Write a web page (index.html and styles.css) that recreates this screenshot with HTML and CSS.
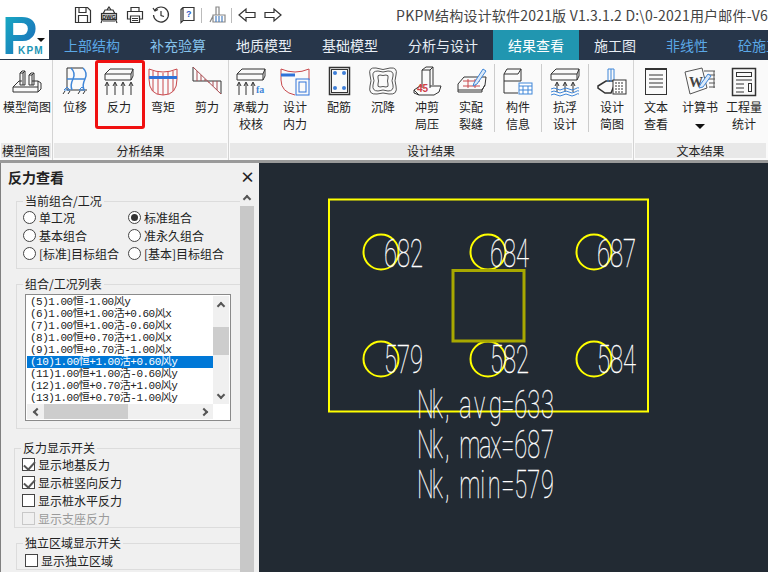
FILE: index.html
```html
<!DOCTYPE html>
<html lang="zh-CN">
<head>
    <meta charset="UTF-8">
    <meta name="viewport" content="width=device-width, initial-scale=1.0">
    <title>PKPM结构设计软件2021版</title>
    <link rel="stylesheet" href="styles.css">
    </head>
<body>

<div class="logo">
    <svg width="49" height="49" viewBox="0 0 49 49">
        <defs>
            <linearGradient id="logoFill" x1="0" y1="0" x2="1" y2="1">
                <stop offset="0" stop-color="#17b3c4"/>
                <stop offset="1" stop-color="#1d62b8"/>
            </linearGradient>
        </defs>
        <text x="2" y="44" class="logo-p" fill="url(#logoFill)">P</text>
        <text x="18" y="44" class="logo-kpm">KPM</text>
        <path d="M37 28h8l-4 4z" fill="#111"/>
    </svg>
</div>

<header class="titlebar">
    <div class="quick-tools">
        <svg class="tool" viewBox="0 0 18 18"><path d="M1.500 1.500h12l3 3v12h-15z M5 1.500v5h7v-5 M4.500 16.500v-7h9v7"/></svg>
        <svg class="tool" viewBox="0 0 18 18"><path d="M9 1l2 3H7z M5 4h8l2 4H3z M3 12l-2 5 M15 12l2 5 M3 15h12"/><rect x="1.500" y="7.500" width="15" height="6" fill="#ccc"/><text x="9" y="12.500" class="dwg-mark">DWG</text></svg>
        <svg class="tool" viewBox="0 0 18 18"><path d="M5 5V1.500h8V5 M4.500 13H1.500V5.500h15V13h-3 M4.500 10h9v6.500h-9z M6 12.500h6 M6 14.500h6"/></svg>
        <svg class="tool" viewBox="0 0 18 18"><path d="M3 4a7.500 7.500 0 1 1-1.500 5 M1 2l2 3 3-1.500 M9 5v4.500l3 1"/></svg>
        <svg class="tool" viewBox="0 0 18 18"><path d="M3 3.500 5 1.500h11v13H5l-2 2z M3 3.500v13 M5 1.500v13"/><text x="8" y="11" class="help-mark">?</text></svg>
        <span class="tool-sep"></span>
        <svg class="tool tool-pale" viewBox="0 0 18 18"><path d="M8 1h3v8H8z M5 9h12v7H5z M2 16l3-6" /><path d="M8 10v6 M11 10v6 M14 10v6" stroke="#4a7fc0"/></svg>
        <span class="tool-sep"></span>
        <svg class="tool" viewBox="0 0 18 18"><path d="M1 9l7-6v3.500h9v5H8V15z"/></svg>
        <svg class="tool" viewBox="0 0 18 18"><path d="M17 9l-7-6v3.500H1v5h9V15z"/></svg>
    </div>
    <div class="app-title">PKPM结构设计软件2021版 V1.3.1.2 D:\0-2021用户邮件-V6</div>
</header>

<nav class="tabs">
    <a class="tab tab-blue">上部结构</a>
    <a class="tab tab-sky">补充验算</a>
    <a class="tab">地质模型</a>
    <a class="tab">基础模型</a>
    <a class="tab">分析与设计</a>
    <a class="tab active">结果查看</a>
    <a class="tab">施工图</a>
    <a class="tab tab-blue">非线性</a>
    <a class="tab tab-blue">砼施工</a>
</nav>

<section class="ribbon">
    <div class="group group-model">
        <div class="items">
            <div class="item">
                <svg class="ico" viewBox="0 0 44 36"><path d="M8 21l6-6h3 M27 15h6v6H8v5h25v-5 M33 15l3 2v6l-3 3"/><path d="M15 7l2-2h3l0 14h-5z M15 7h3v12 M18 7l2-2 M24 9l2-2h3v12h-5z M24 9h3v10 M27 9l2-2"/></svg>
                <span class="label">模型简图</span>
            </div>
        </div>
        <div class="band">模型简图</div>
    </div>

    <div class="group group-analysis">
        <div class="items">
            <div class="item">
                <svg class="ico" viewBox="0 0 44 36"><path d="M14 2v22 M14 2h16 M14 24h20" stroke="#333"/><path d="M30 2q5 5 2 11t-1 11 M14 13h18 M18 2q5 5 2 11t-1 11" stroke="#3f86d8" stroke-width="1.500"/><path d="M11 24l3-3 3 3z M26 24l3-3 3 3z" stroke="#3f86d8"/><path d="M10 28l2-3 M15 28l2-3 M25 28l2-3 M30 28l2-3"/></svg>
                <span class="label">位移</span>
            </div>
            <div class="item item-marked">
                <svg class="ico" viewBox="0 0 44 36"><path d="M8 8l5-5h23l-2 5H8v6h26V8 M34 14l2-4V3"/><path d="M10 29V17M8 20l2-4 2 4 M18 29V17M16 20l2-4 2 4 M26 29V17M24 20l2-4 2 4 M34 29V17M32 20l2-4 2 4"/></svg>
                <span class="label">反力</span>
            </div>
            <div class="item">
                <svg class="ico" viewBox="0 0 44 36"><path d="M8 3q14 6 28 0v10q0 16-14 16T8 13z M12 5v20 M17 6v22 M22 7v22 M27 6v22 M32 5v20" stroke="#c8484c"/><path d="M8 11.500h28" stroke="#2f72d8" stroke-width="3"/></svg>
                <span class="label">弯矩</span>
            </div>
            <div class="item">
                <svg class="ico" viewBox="0 0 44 36"><path d="M8 1v14h28v13"/><path d="M8 1l28 27 M12 5v10 M16 9v6 M20 13v2 M24 16v1 M28 15v5 M32 15v9" stroke="#a84a50"/></svg>
                <span class="label">剪力</span>
            </div>
        </div>
        <div class="band">分析结果</div>
    </div>

    <div class="group group-design">
        <div class="items">
            <div class="item item-wrap">
                <svg class="ico" viewBox="0 0 44 36"><path d="M8 8l5-5h23l-2 5H8v6h26V8 M34 14l2-4V3"/><path d="M10 29V17M8 20l2-4 2 4 M17 29V17M15 20l2-4 2 4 M24 29V17M22 20l2-4 2 4"/><text x="27" y="27" class="ico-text">fa</text></svg>
                <span class="label">承载力<br>校核</span>
            </div>
            <div class="item">
                <svg class="ico" viewBox="0 0 44 36"><path d="M8 3q14 6 28 0v11 M8 3v11q0 12 14 15" stroke="#c8484c"/><path d="M8 9h14" stroke="#2f72d8" stroke-width="3"/><rect x="23" y="13" width="13" height="16" stroke="#2f72d8" fill="#fafafa"/><rect x="26" y="16" width="7" height="10" stroke="#2f72d8"/></svg>
                <span class="label">设计<br>内力</span>
            </div>
            <div class="item">
                <svg class="ico" viewBox="0 0 44 36"><rect x="12.500" y="1.500" width="20" height="27" stroke-width="1.500"/><rect x="14.500" y="3.500" width="16" height="23"/><circle cx="18" cy="7" r="2" class="dot"/><circle cx="27" cy="7" r="2" class="dot"/><circle cx="18" cy="22" r="2" class="dot"/><circle cx="27" cy="22" r="2" class="dot"/></svg>
                <span class="label">配筋</span>
            </div>
            <div class="item">
                <svg class="ico ico-gray" viewBox="0 0 44 36"><path d="M15 2Q22 5 29 2 37 1 35 9 33 15 35 20 37 29 28 28 22 26 16 28 7 29 9 20 11 15 9 9 7 1 15 2z"/><path d="M17 5Q22 7 27 5 33 5 32 10 30 15 32 19 33 25 27 25 22 23 17 25 11 25 12 19 14 15 12 10 11 5 17 5z"/><path d="M19 9Q22 10 25 9 28 9 27 12 26 15 27 18 28 21 25 21 22 20 19 21 16 21 17 18 18 15 17 12 16 9 19 9z"/></svg>
                <span class="label">沉降</span>
            </div>
            <div class="item">
                <svg class="ico" viewBox="0 0 44 36"><path d="M17 4l4-3h7l-3 3h-8v18 M25 4v18 M28 1v18"/><path d="M9 24l6-4h2 M25 20h11l-2 6-5 3H14l-5-5v3l5 2"/><text x="12" y="26" class="ico-text ico-red">45</text></svg>
                <span class="label">冲剪<br>局压</span>
            </div>
            <div class="item">
                <svg class="ico" viewBox="0 0 44 36"><path d="M9 18l6-7h22l-1 8-3 5H9z M9 24v2h24v-2 M33 24l3-5"/><path d="M14 15h17 M14 20h17 M19 13v9 M26 13v9" stroke="#c8484c"/><path d="M25 17l9-14 3 2-9 13-4 2z" stroke="#3f86d8" fill="#dbe9f8"/></svg>
                <span class="label">实配<br>裂缝</span>
            </div>
            <span class="item-sep"></span>
            <div class="item">
                <svg class="ico" viewBox="0 0 44 36"><path d="M8 8h14l3-5v12H8z M8 8l3-5h14 M8 15v12h14"/><rect x="23" y="17" width="13" height="11" stroke="#3f86d8" fill="#fff"/><path d="M23 20h13 M23 24h13 M27 20v8 M32 20v8" stroke="#3f86d8"/></svg>
                <span class="label">构件<br>信息</span>
            </div>
            <span class="item-sep"></span>
            <div class="item">
                <svg class="ico" viewBox="0 0 44 36"><path d="M8 8l5-5h23l-2 5H8v6h26V8 M34 14l2-4V3"/><path d="M14 26V17M12 20l2-4 2 4 M22 26V17M20 20l2-4 2 4 M30 26V17M28 20l2-4 2 4"/><path d="M8 23q3-2 6 0t6 0 6 0 6 0 4-1 M8 26q3-2 6 0t6 0 6 0 6 0 4-1 M8 29q3-2 6 0t6 0 6 0 6 0 4-1" stroke="#3f86d8"/></svg>
                <span class="label">抗浮<br>设计</span>
            </div>
            <span class="item-sep"></span>
            <div class="item">
                <svg class="ico" viewBox="0 0 44 36"><path d="M8 20l8-5h10l-5 12h-6L8 22z" stroke-width="1.500"/><path d="M18 16V3h6v13 M21 3v13" stroke="#3f86d8"/><rect x="23" y="14" width="13" height="14" fill="#fff"/><path d="M25 17h9 M25 20h9 M25 23h9 M25 26h9" stroke-dasharray="2 1"/></svg>
                <span class="label">设计<br>简图</span>
            </div>
        </div>
        <div class="band">设计结果</div>
    </div>

    <div class="group group-text">
        <div class="items">
            <div class="item">
                <svg class="ico" viewBox="0 0 44 36"><rect x="11.500" y="2.500" width="21" height="26"/><path d="M11 3h22" stroke-width="2"/><path d="M15 9h14 M15 13h14 M15 17h14 M15 21h14"/></svg>
                <span class="label">文本<br>查看</span>
            </div>
            <div class="item">
                <svg class="ico ico-gray" viewBox="0 0 44 36"><path d="M7 6l17-4 5 20-17 6z"/><path d="M26 5h11 M30 9h7 M31 13h6 M31 17h6 M31 21h6 M36 5v17" stroke="#555"/><text x="11" y="21" class="ico-word">W</text><path d="M22 19l8-11 3 2-8 11-4 1z" stroke="#3f86d8" fill="#dbe9f8"/></svg>
                <span class="label">计算书</span>
                <span class="menu-caret"></span>
            </div>
            <div class="item">
                <svg class="ico" viewBox="0 0 44 36"><rect x="10.500" y="2.500" width="23" height="27" stroke-width="1.500"/><rect x="14.500" y="6.500" width="15" height="4"/><path d="M14 14h16 M14 18h8 M14 22h8 M14 26h8"/><rect x="26.500" y="17.500" width="3" height="8"/></svg>
                <span class="label">工程量<br>统计</span>
            </div>
        </div>
        <div class="band">文本结果</div>
    </div>
</section>

<main class="workspace">
    <aside class="side">
        <div class="side-title">
            <span>反力查看</span>
            <span class="side-close">×</span>
        </div>
        <div class="side-body">
            <div class="side-scroll">
                <fieldset class="box">
                    <legend>当前组合/工况</legend>
                    <div class="radio-grid">
                        <label class="opt"><input type="radio" name="combo">单工况</label>
                        <label class="opt"><input type="radio" name="combo" checked>标准组合</label>
                        <label class="opt"><input type="radio" name="combo">基本组合</label>
                        <label class="opt"><input type="radio" name="combo">准永久组合</label>
                        <label class="opt"><input type="radio" name="combo">[标准]目标组合</label>
                        <label class="opt"><input type="radio" name="combo">[基本]目标组合</label>
                    </div>
                </fieldset>

                <fieldset class="box box-list">
                    <legend>组合/工况列表</legend>
                    <div class="list-box">
                        <div class="list-rows">
                            <div class="list-row">(5)1.00恒-1.00风y</div>
                            <div class="list-row">(6)1.00恒+1.00活+0.60风x</div>
                            <div class="list-row">(7)1.00恒+1.00活-0.60风x</div>
                            <div class="list-row">(8)1.00恒+0.70活+1.00风x</div>
                            <div class="list-row">(9)1.00恒+0.70活-1.00风x</div>
                            <div class="list-row selected">(10)1.00恒+1.00活+0.60风y</div>
                            <div class="list-row">(11)1.00恒+1.00活-0.60风y</div>
                            <div class="list-row">(12)1.00恒+0.70活+1.00风y</div>
                            <div class="list-row">(13)1.00恒+0.70活-1.00风y</div>
                        </div>
                        <div class="vbar">
                            <span class="bar-btn"><i class="chev chev-up"></i></span>
                            <span class="vbar-thumb"></span>
                            <span class="bar-btn bar-end"><i class="chev chev-down"></i></span>
                        </div>
                        <div class="hbar">
                            <span class="bar-btn"><i class="chev chev-left"></i></span>
                            <span class="hbar-thumb"></span>
                            <span class="bar-btn bar-end"><i class="chev chev-right"></i></span>
                        </div>
                    </div>
                </fieldset>

                <fieldset class="box box-switch">
                    <legend>反力显示开关</legend>
                    <label class="opt"><input type="checkbox" checked>显示地基反力</label>
                    <label class="opt"><input type="checkbox" checked>显示桩竖向反力</label>
                    <label class="opt"><input type="checkbox">显示桩水平反力</label>
                    <label class="opt opt-off"><input type="checkbox" disabled>显示支座反力</label>
                </fieldset>

                <fieldset class="box box-region">
                    <legend>独立区域显示开关</legend>
                    <label class="opt"><input type="checkbox">显示独立区域</label>
                </fieldset>
            </div>
            <div class="side-bar">
                <span class="side-bar-btn"><i class="chev chev-up"></i></span>
                <span class="side-bar-thumb"></span>
            </div>
        </div>
    </aside>

    <div class="canvas">
        <svg class="drawing" width="509" height="409" viewBox="259 163 509 409">
            <rect x="329" y="199.500" width="319" height="212" class="cad-yellow"/>
            <circle cx="381" cy="252" r="17.500" class="cad-circle"/>
            <circle cx="488" cy="252" r="17.500" class="cad-circle"/>
            <circle cx="594" cy="252" r="17.500" class="cad-circle"/>
            <circle cx="381" cy="359" r="17.500" class="cad-circle"/>
            <circle cx="488" cy="359" r="17.500" class="cad-circle"/>
            <circle cx="594" cy="359" r="17.500" class="cad-circle"/>
            <rect x="453" y="270.500" width="71" height="70.500" class="cad-column"/>
            <text x="384" y="267" textLength="39" lengthAdjust="spacingAndGlyphs" class="cad-text">682</text>
            <text x="490" y="267" textLength="39" lengthAdjust="spacingAndGlyphs" class="cad-text">684</text>
            <text x="597" y="267" textLength="39" lengthAdjust="spacingAndGlyphs" class="cad-text">687</text>
            <text x="384" y="373" textLength="39" lengthAdjust="spacingAndGlyphs" class="cad-text">579</text>
            <text x="490" y="373" textLength="39" lengthAdjust="spacingAndGlyphs" class="cad-text">582</text>
            <text x="597" y="373" textLength="39" lengthAdjust="spacingAndGlyphs" class="cad-text">584</text>
            <text transform="translate(417 418) scale(.62 1)" x="0 24 45 68 92 116 136 157 178 200" class="cad-text">Nk,avg=633</text>
            <text transform="translate(417 458) scale(.62 1)" x="0 24 45 68 100 118 136 157 178 200" class="cad-text">Nk,max=687</text>
            <text transform="translate(417 498) scale(.62 1)" x="0 24 45 68 102 114 136 157 178 200" class="cad-text">Nk,min=579</text>
        </svg>
    </div>
</main>

</body>
</html>
```

FILE: styles.css
```css
* {
    box-sizing: border-box;
}

html, body {
    margin: 0;
    height: 100%;
}

body {
    position: relative;
    width: 768px;
    height: 572px;
    overflow: hidden;
    display: flex;
    flex-direction: column;
    background-color: #fafafa;
    color: #222;
    font-family: "Noto Sans CJK SC", "Noto Sans", sans-serif;
    font-size: 12px;
}

/* logo sits over the title bar and the tabs */
.logo {
    position: absolute;
    left: 0;
    top: 10px;
    width: 49px;
    height: 49px;
    background-color: #fff;
}

.logo svg {
    display: block;
    overflow: visible;
}

.logo-p {
    font-family: "Liberation Sans", sans-serif;
    font-size: 53px;
    font-weight: bold;
}

.logo-kpm {
    font-family: "Liberation Sans", sans-serif;
    font-size: 10px;
    font-weight: bold;
    letter-spacing: 1.2px;
    fill: #1b94b4;
}

.titlebar {
    height: 30px;
    flex: none;
    display: flex;
    align-items: center;
    background-color: #fff;
    padding-left: 70px;
}

.quick-tools {
    display: flex;
    align-items: center;
    width: 328px;
}

.tool {
    width: 18px;
    height: 18px;
    margin: 0 4px;
    fill: none;
    stroke: #333;
    stroke-width: 1.2;
}

.tool-pale {
    stroke: #888;
}

.tool-sep {
    width: 1px;
    height: 15px;
    margin: 0 2px 0 1px;
    background-color: #bbb;
}

.help-mark {
    font-family: "Liberation Sans", sans-serif;
    font-size: 9px;
    font-weight: bold;
    fill: #2f62c8;
    stroke: none;
}

.dwg-mark {
    font-family: "Liberation Sans", sans-serif;
    font-size: 5.5px;
    font-weight: bold;
    text-anchor: middle;
    fill: #222;
    stroke: none;
}

.app-title {
    font-size: 14px;
    color: #444;
    white-space: nowrap;
    line-height: 30px;
    letter-spacing: 0.2px;
}

.tabs {
    height: 30px;
    flex: none;
    display: flex;
    padding-left: 49px;
    background-color: #27364a;
}

.tab {
    flex: none;
    padding: 0 15px;
    font-size: 14px;
    line-height: 31px;
    color: #e8eef5;
}

.tab-blue {
    color: #5ba8e6;
}

.tab-sky {
    color: #86c3ec;
}

.tab.active {
    background-color: #2196b0;
    color: #fff;
}

.ribbon {
    height: 103px;
    flex: none;
    display: flex;
    background-color: #fafafa;
    border-bottom: 3px solid #9a9a9a;
}

.group {
    display: flex;
    flex-direction: column;
}

.group + .group {
    box-shadow: -1px 0 0 #d4d4d4;
}

.group-model {
    width: 53px;
}

.group-analysis {
    width: 176px;
}

.group-design {
    width: 405px;
}

.group-text {
    width: 134px;
}

.items {
    height: 83px;
    flex: none;
    display: flex;
}

.group-model .items {
    padding-left: 5px;
}

.item {
    position: relative;
    width: 44px;
    flex: none;
    display: flex;
    flex-direction: column;
    align-items: center;
    padding-top: 6px;
}

/* red annotation box drawn round one button */
.item-marked::after {
    content: "";
    position: absolute;
    left: -2px;
    top: 0;
    width: 44px;
    height: 63px;
    border: 3px solid #f01010;
    border-radius: 3px;
}

.ico {
    width: 44px;
    height: 36px;
    flex: none;
    fill: none;
    stroke: #333;
    stroke-width: 1;
}

.ico-gray {
    stroke: #555;
}

.dot {
    fill: #3f7fd8;
    stroke: none;
}

.ico-text {
    font-family: "Liberation Serif", serif;
    font-size: 10px;
    font-weight: bold;
    fill: #3f86d8;
    stroke: none;
}

.ico-red {
    font-family: "Liberation Sans", sans-serif;
    fill: #d04048;
}

.ico-word {
    font-family: "Liberation Serif", serif;
    font-size: 14px;
    font-weight: bold;
    fill: #444;
    stroke: none;
}

.label {
    margin-top: -4px;
    line-height: 17px;
    text-align: center;
    white-space: nowrap;
}

.item-sep {
    width: 1px;
    height: 68px;
    margin: 4px 1px 0;
    flex: none;
    background-color: #ccc;
}

.menu-caret {
    margin-top: 9px;
    border-style: solid;
    border-width: 5px 5px 0;
    border-color: #111 transparent transparent;
}

.band {
    height: 15px;
    margin: 0 2px 0 1px;
    flex: none;
    background-color: #e8e8e8;
    line-height: 15px;
    text-align: center;
    white-space: nowrap;
}

.workspace {
    flex: 1;
    min-height: 0;
    display: flex;
}

.side {
    width: 259px;
    flex: none;
    display: flex;
    flex-direction: column;
    border-left: 1px solid #808080;
    padding-right: 5px;
    background-color: #f0f0f0;
}

.side-title {
    height: 26px;
    flex: none;
    display: flex;
    align-items: center;
    justify-content: space-between;
    padding: 2px 2px 0 7px;
    font-size: 14px;
    font-weight: bold;
}

.side-close {
    width: 12px;
    font-size: 15px;
    line-height: 18px;
    text-align: center;
}

.side-body {
    flex: 1;
    min-height: 0;
    display: flex;
}

.side-scroll {
    width: 239px;
    flex: none;
    overflow: hidden;
}

.side-bar {
    width: 14px;
    flex: none;
    display: flex;
    flex-direction: column;
    background-color: #f0f0f0;
}

.side-bar-btn {
    height: 17px;
    flex: none;
    display: flex;
    align-items: center;
    justify-content: center;
}

.side-bar-thumb {
    flex: 1;
    background-color: #c8c8c8;
}

.box {
    min-width: 0;
    margin: 0 0 0 15px;
    padding: 0 0 0 8px;
    border: 1px solid #dcdcdc;
    border-right: none;
}

.box legend {
    margin-left: -2px;
    padding: 0 2px;
    line-height: 16px;
}

.box:first-child {
    margin-top: 4px;
    padding-bottom: 6px;
}

.radio-grid {
    display: grid;
    grid-template-columns: 105px 105px;
    margin: -1px 0 0 -2px;
}

.opt {
    height: 18px;
    display: flex;
    align-items: center;
    gap: 3px;
    white-space: nowrap;
}

.opt-off {
    color: #9a9a9a;
}

.opt input {
    appearance: none;
    width: 13px;
    height: 13px;
    margin: 0;
    flex: none;
    position: relative;
    border: 1px solid #444;
    background-color: #fff;
}

.opt input[type="radio"] {
    border-radius: 50%;
}

.opt input[type="radio"]:checked::after {
    content: "";
    position: absolute;
    left: 2px;
    top: 2px;
    width: 7px;
    height: 7px;
    border-radius: 50%;
    background-color: #333;
}

.opt input[type="checkbox"]:checked::after {
    content: "";
    position: absolute;
    left: 3px;
    top: 0;
    width: 5px;
    height: 9px;
    border: solid #555;
    border-width: 0 2px 2px 0;
    transform: rotate(42deg);
}

.opt input:disabled {
    border-color: #c8c8c8;
    background-color: #f0f0f0;
}

.box-list {
    margin-top: 7px;
    padding-bottom: 7px;
}

.list-box {
    width: 206px;
    height: 127px;
    margin-top: 2px;
    display: grid;
    grid-template-columns: 186px 16px;
    grid-template-rows: 108px 15px;
    padding: 1px;
    border: 1px solid #8a8a8a;
    background-color: #fff;
}

.list-rows {
    overflow: hidden;
}

.list-row {
    height: 12px;
    padding-left: 3px;
    font-family: "Liberation Mono", "Noto Sans CJK SC", monospace;
    font-size: 11px;
    letter-spacing: -0.5px;
    line-height: 13px;
    white-space: nowrap;
    overflow: hidden;
}

.list-row.selected {
    background-color: #0078d7;
    color: #fff;
}

.vbar {
    display: flex;
    flex-direction: column;
    background-color: #f0f0f0;
}

.vbar-thumb {
    width: 16px;
    height: 28px;
    margin-top: 14px;
    background-color: #cdcdcd;
}

.hbar {
    display: flex;
    background-color: #f0f0f0;
}

.hbar-thumb {
    width: 84px;
    height: 15px;
    background-color: #cdcdcd;
}

.bar-btn {
    width: 17px;
    height: 17px;
    flex: none;
    display: flex;
    align-items: center;
    justify-content: center;
}

.hbar .bar-btn {
    height: 15px;
}

.vbar .bar-btn {
    width: 16px;
}

.bar-end {
    margin: auto 0 0 auto;
}

.chev {
    display: block;
    width: 6px;
    height: 6px;
    border: solid #555;
    border-width: 2px 0 0 2px;
}

.chev-up {
    transform: translateY(1px) rotate(45deg);
}

.chev-down {
    transform: translateY(-1px) rotate(225deg);
}

.chev-left {
    transform: translateX(1px) rotate(-45deg);
}

.chev-right {
    transform: translateX(-1px) rotate(135deg);
}

.box-switch {
    margin: 11px 0 0 13px;
}

.box-switch .opt {
    margin-left: -1px;
}

.box-switch legend + .opt {
    margin-top: -1px;
}

.box-region {
    margin-top: 7px;
}

.canvas {
    flex: 1;
    min-width: 0;
    background-color: #222a33;
}

.drawing {
    display: block;
}

.cad-yellow {
    fill: none;
    stroke: #ffff00;
    stroke-width: 2;
}

.cad-circle {
    fill: none;
    stroke: #ffff00;
    stroke-width: 2;
}

.cad-column {
    fill: none;
    stroke: #a8a800;
    stroke-width: 3;
}

.cad-text {
    font-family: Roboto, "Liberation Sans", sans-serif;
    font-size: 38px;
    font-weight: 100;
    fill: #fff;
    stroke: #fff;
    stroke-width: 0.3;
}
```
